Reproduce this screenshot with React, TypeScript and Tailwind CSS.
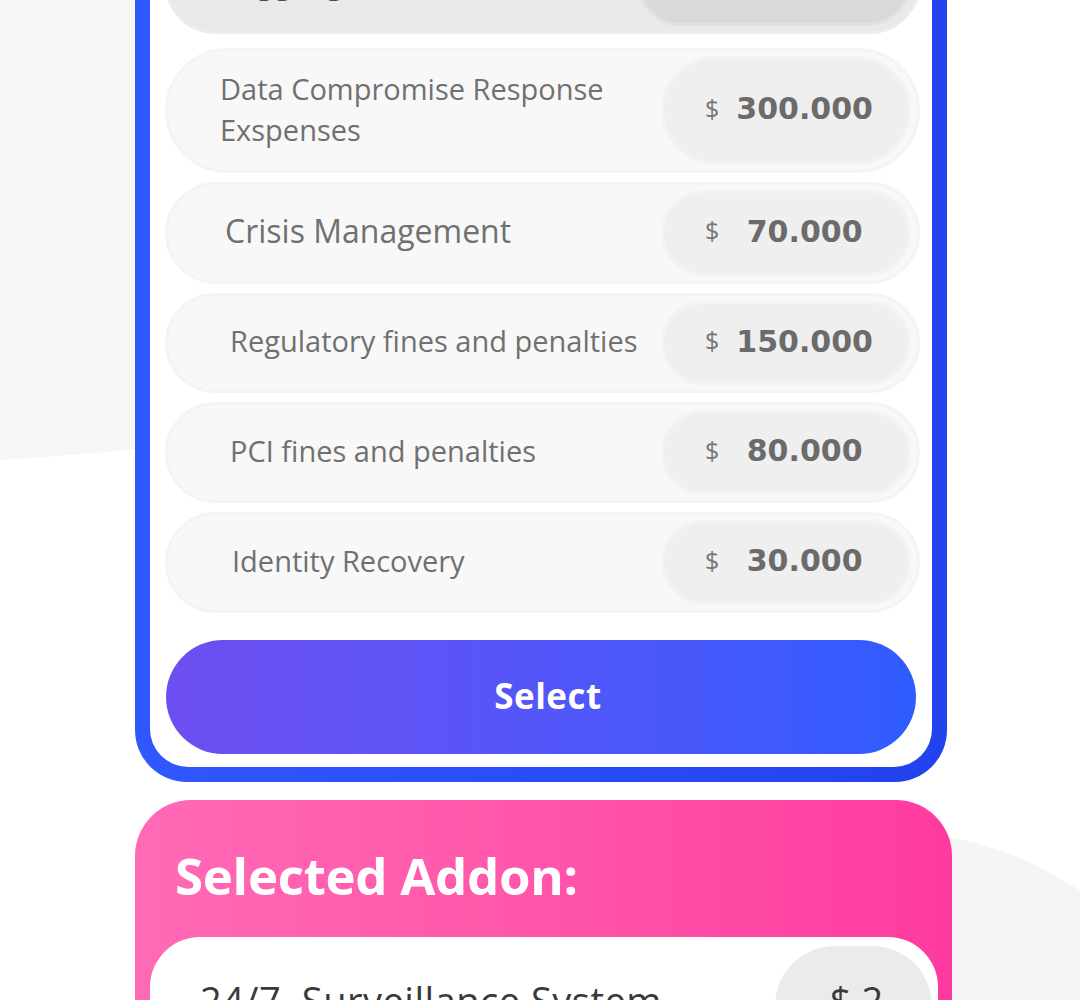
import React from "react"

type Cover = {
  label: string
  value: string
  h: string
  pl: string
  size: string
}

const covers: Cover[] = [
  { label: "Data Compromise Response Exspenses", value: "300.000", h: "h-[125px]", pl: "pl-[52px]", size: "text-[29px] leading-[41px]" },
  { label: "Crisis Management", value: "70.000", h: "h-[102px]", pl: "pl-[57px]", size: "text-[32px]" },
  { label: "Regulatory fines and penalties", value: "150.000", h: "h-[100px]", pl: "pl-[62px]", size: "text-[29px]" },
  { label: "PCI fines and penalties", value: "80.000", h: "h-[101px]", pl: "pl-[62px]", size: "text-[29px]" },
  { label: "Identity Recovery", value: "30.000", h: "h-[101px]", pl: "pl-[64px]", size: "text-[29px]" },
]

const numFont = { fontFamily: '"DejaVu Sans", "Open Sans", sans-serif' }

function CoverRow({ c }: { c: Cover }) {
  return (
    <div className={`flex items-stretch justify-between rounded-full border-[3px] border-[#f4f4f4] bg-[#f8f8f8] py-[5px] pr-[6px] ${c.h} ${c.pl}`}>
      <div className={`flex max-w-[410px] items-center pb-[4px] text-[#707070] ${c.size}`}>{c.label}</div>
      <div className="flex w-[250px] shrink-0 items-center rounded-full border-[3px] border-[#f3f3f3] bg-[#efefef] pl-[41px] pr-[18px] pb-[4px]">
        <span className="text-[25px] text-[#777777]">$</span>
        <span className="flex-1 text-center text-[30px] font-bold text-[#6b6b6b]" style={numFont}>
          {c.value}
        </span>
      </div>
    </div>
  )
}

export default function App() {
  return (
    <div className="relative h-[1000px] w-[1080px] overflow-hidden bg-white" style={{ fontFamily: '"Open Sans", "Noto Sans", sans-serif' }}>
      {/* background shapes */}
      <div className="absolute left-[-1100px] top-[-462px] h-[924px] w-[2000px] rounded-[50%] bg-[#f6f6f6]" />
      <div className="absolute left-[299px] top-[833px] h-[2470px] w-[1200px] rounded-[50%] bg-[#f5f5f6]" />

      <div className="relative ml-[135px] mt-[-90px] w-[817px]">
        {/* plan card */}
        <div className="w-[812px] rounded-b-[52px] bg-linear-to-r from-[#3157ff] to-[#2142ee] px-[15px] pb-[15px]">
          <div className="flex flex-col rounded-b-[38px] bg-white pb-[13px] pl-[15px] pr-[12px] pt-[24px]">
            <div className="flex h-[100px] items-stretch justify-between rounded-full border-[3px] border-[#ececec] bg-[#e9e9e9] py-[5px] pl-[66px] pr-[7px]">
              <div className="flex items-center pb-[7px] text-[32px] font-bold text-[#4a4a4a]">Aggregate Limit</div>
              <div className="flex w-[272px] items-center justify-center rounded-full border-[3px] border-[#e1e1e1] bg-[#d9d9d9] text-[30px] font-bold text-[#f2f2f2]" style={numFont}>
                $ 1.000.000
              </div>
            </div>
            <div className="mt-[14px] flex flex-col gap-[9px]">
              {covers.map((c) => (
                <CoverRow key={c.label} c={c} />
              ))}
            </div>
            <button className="mt-[27px] ml-px flex h-[114px] w-[750px] items-center justify-center rounded-full bg-linear-to-r from-[#6d4ef1] to-[#2e5cff] pb-[2px] pl-[14px] text-[35px] font-bold tracking-[0.5px] text-white">
              Select
            </button>
          </div>
        </div>

        {/* addon card */}
        <div className="mt-[18px] h-[300px] w-[817px] rounded-t-[56px] bg-linear-to-r from-[#ff6ab5] to-[#ff3a9f] px-[14px] pt-[43px]">
          <div className="pl-[26px] text-[51px] font-bold leading-[64px] tracking-[-0.3px] text-white">Selected Addon:</div>
          <div className="ml-px mt-[30px] flex h-[140px] w-[788px] justify-between rounded-t-[50px] bg-white pl-[50px] pr-[6px] pt-[9px]">
            <div className="pt-[26px] text-[38px] tracking-[0.5px] text-[#3a3a3a]">24/7&nbsp; Surveillance System</div>
            <div className="flex h-[120px] w-[157px] justify-center rounded-t-[60px] bg-[#ebebeb] pl-[6px] pt-[26px] text-[38px] text-[#3a3a3a]">$ 2</div>
          </div>
        </div>
      </div>
    </div>
  )
}
